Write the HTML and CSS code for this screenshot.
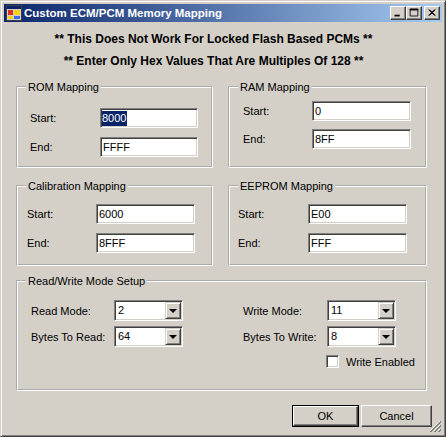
FILE: index.html
```html
<!DOCTYPE html>
<html lang="en">
<head>
    <meta charset="UTF-8">
    <title>Custom ECM/PCM Memory Mapping</title>
    <link rel="stylesheet" href="styles.css">
</head>
<body>
    <div class="window">
        <div class="titlebar">
            <svg class="app-icon" viewBox="0 0 16 16">
                <rect x="0.5" y="0.5" width="15" height="15" fill="#d4d0c8" stroke="#404040"/>
                <rect x="1" y="1" width="14" height="3" fill="#0a246a"/>
                <rect x="2" y="5" width="5" height="5" fill="#e03020"/>
                <rect x="8" y="5" width="6" height="5" fill="#f8d020"/>
                <rect x="2" y="11" width="5" height="3" fill="#f8d020"/>
                <rect x="8" y="11" width="6" height="3" fill="#3a6ee8"/>
            </svg>
            <span class="title">Custom ECM/PCM Memory Mapping</span>
            <div class="caption-buttons">
                <div class="cap-btn">
                    <svg viewBox="0 0 16 14"><rect x="4" y="9" width="6" height="2" fill="#000"/></svg>
                </div>
                <div class="cap-btn">
                    <svg viewBox="0 0 16 14"><path d="M3.5 2.5h9v8h-9z" fill="none" stroke="#000"/><rect x="3" y="2" width="10" height="2" fill="#000"/></svg>
                </div>
                <div class="cap-btn cap-close">
                    <svg viewBox="0 0 16 14"><path d="M4 3l7 7M5 3l7 7M11 3l-7 7M12 3l-7 7" stroke="#000" stroke-width="1.1"/></svg>
                </div>
            </div>
        </div>

        <div class="client">
            <p class="notice">** This Does Not Work For Locked Flash Based PCMs **</p>
            <p class="notice notice-second">** Enter Only Hex Values That Are Multiples Of 128 **</p>

            <div class="groups">
                <fieldset class="group">
                    <legend>ROM Mapping</legend>
                    <div class="group-body body-rom">
                        <label>Start:</label>
                        <div class="textbox"><span class="sel">8000</span></div>
                        <label>End:</label>
                        <div class="textbox">FFFF</div>
                    </div>
                </fieldset>

                <fieldset class="group">
                    <legend>RAM Mapping</legend>
                    <div class="group-body body-ram">
                        <label>Start:</label>
                        <div class="textbox">0</div>
                        <label>End:</label>
                        <div class="textbox">8FF</div>
                    </div>
                </fieldset>

                <fieldset class="group">
                    <legend>Calibration Mapping</legend>
                    <div class="group-body body-cal">
                        <label>Start:</label>
                        <div class="textbox">6000</div>
                        <label>End:</label>
                        <div class="textbox">8FFF</div>
                    </div>
                </fieldset>

                <fieldset class="group">
                    <legend>EEPROM Mapping</legend>
                    <div class="group-body body-eeprom">
                        <label>Start:</label>
                        <div class="textbox">E00</div>
                        <label>End:</label>
                        <div class="textbox">FFF</div>
                    </div>
                </fieldset>
            </div>

            <fieldset class="group group-rw">
                <legend>Read/Write Mode Setup</legend>
                <div class="rw-body">
                    <label>Read Mode:</label>
                    <div class="combo"><span>2</span><div class="drop"></div></div>
                    <span></span>
                    <label>Write Mode:</label>
                    <div class="combo"><span>11</span><div class="drop"></div></div>

                    <label>Bytes To Read:</label>
                    <div class="combo"><span>64</span><div class="drop"></div></div>
                    <span></span>
                    <label>Bytes To Write:</label>
                    <div class="combo"><span>8</span><div class="drop"></div></div>

                    <div class="check-row">
                        <div class="checkbox"></div>
                        <span>Write Enabled</span>
                    </div>
                </div>
            </fieldset>

            <div class="buttons">
                <div class="btn btn-default"><div class="btn-face">OK</div></div>
                <div class="btn"><div class="btn-face">Cancel</div></div>
            </div>
        </div>

        <svg class="grip" viewBox="0 0 12 12">
            <path d="M11 1L1 11M11 5L5 11M11 9L9 11" stroke="#fff" stroke-width="1"/>
            <path d="M12 1L1 12M12 2L2 12M12 5L5 12M12 6L6 12M12 9L9 12M12 10L10 12" stroke="#808080" stroke-width="1"/>
        </svg>
    </div>
</body>
</html>
```

FILE: styles.css
```css
body {
    margin: 0;
    background: #d4d0c8;
    font-family: "Liberation Sans", Arial, sans-serif;
    font-size: 11px;
    color: #000;
}
.window {
    position: relative;
    width: 446px;
    height: 437px;
    box-sizing: border-box;
    border: 1px solid;
    border-color: #d4d0c8 #404040 #404040 #d4d0c8;
    box-shadow: inset 1px 1px #fff, inset -1px -1px #808080;
    padding: 3px;
    background: #d4d0c8;
}
.titlebar {
    height: 18px;
    display: flex;
    align-items: center;
    padding: 0 2px;
    background: linear-gradient(to right, #0a246a, #a6caf0);
}
.app-icon {
    width: 16px;
    height: 16px;
    margin-right: 2px;
}
.title {
    flex: 1;
    font-weight: bold;
    font-size: 11.5px;
    color: #fff;
}
.caption-buttons {
    display: flex;
}
.cap-btn {
    width: 16px;
    height: 14px;
    box-sizing: border-box;
    background: #d4d0c8;
    border: 1px solid;
    border-color: #fff #404040 #404040 #fff;
    box-shadow: inset -1px -1px #808080;
}
.cap-btn svg {
    display: block;
    width: 14px;
    height: 12px;
}
.cap-close {
    margin-left: 2px;
}

.client {
    padding: 0 15px 0 12px;
}
.notice {
    margin: 10px 16px 0 0;
    text-align: center;
    font-weight: bold;
    font-size: 12px;
    line-height: 14px;
}
.notice-second {
    margin-top: 8px;
}

.groups {
    display: grid;
    grid-template-columns: 197px 199px;
    column-gap: 15px;
    row-gap: 11px;
    margin-top: 12px;
}
.group {
    margin: 0;
    padding: 0;
    min-width: 0;
    border: 2px groove #fff;
}
.group legend {
    margin-left: 8px;
    padding: 0 2px;
    line-height: 14px;
}
.group-body {
    display: grid;
    align-items: center;
}
.body-rom {
    grid-template-columns: 70px 98px;
    row-gap: 9px;
    padding: 14px 0 9px 12px;
}
.body-ram {
    grid-template-columns: 69px 99px;
    row-gap: 8px;
    padding: 7px 0 17px 13px;
}
.body-cal {
    grid-template-columns: 69px 99px;
    row-gap: 9px;
    padding: 11px 0 11px 9px;
}
.body-eeprom {
    grid-template-columns: 70px 99px;
    row-gap: 9px;
    padding: 11px 0 11px 8px;
}

.textbox {
    height: 20px;
    box-sizing: border-box;
    background: #fff;
    border: 1px solid;
    border-color: #808080 #fff #fff #808080;
    box-shadow: inset 1px 1px #404040, inset -1px -1px #d4d0c8;
    padding: 2px 2px 0 2px;
    line-height: 15px;
}
.sel {
    display: inline-block;
    background: #0a246a;
    color: #fff;
    margin-left: -1px;
    padding-right: 1px;
}

.group-rw {
    margin-top: 8px;
}
.rw-body {
    display: grid;
    grid-template-columns: 83px 69px 60px 84px 69px;
    align-items: center;
    row-gap: 5px;
    padding: 12px 0 21px 13px;
    white-space: nowrap;
}
.combo {
    position: relative;
    height: 21px;
    box-sizing: border-box;
    background: #fff;
    border: 1px solid;
    border-color: #808080 #fff #fff #808080;
    box-shadow: inset 1px 1px #404040, inset -1px -1px #d4d0c8;
    padding: 2px 0 0 3px;
    line-height: 15px;
}
.drop {
    position: absolute;
    top: 1px;
    right: 1px;
    width: 16px;
    height: 17px;
    box-sizing: border-box;
    background: #d4d0c8;
    border: 1px solid;
    border-color: #d4d0c8 #404040 #404040 #d4d0c8;
    box-shadow: inset 1px 1px #fff, inset -1px -1px #808080;
}
.drop::after {
    content: "";
    position: absolute;
    left: 3px;
    top: 6px;
    border-left: 4px solid transparent;
    border-right: 4px solid transparent;
    border-top: 4px solid #000;
}
.check-row {
    grid-column: 5;
    display: flex;
    align-items: center;
    margin: 3px 0 0 -1px;
}
.checkbox {
    flex: none;
    width: 13px;
    height: 13px;
    box-sizing: border-box;
    background: #fff;
    border: 1px solid;
    border-color: #808080 #fff #fff #808080;
    box-shadow: inset 1px 1px #404040, inset -1px -1px #d4d0c8;
    margin-right: 7px;
}

.buttons {
    display: flex;
    justify-content: flex-end;
    gap: 2px;
    margin: 14px -5px 0 0;
}
.btn {
    width: 71px;
    height: 22px;
    box-sizing: border-box;
}
.btn-face {
    height: 100%;
    box-sizing: border-box;
    border: 1px solid;
    border-color: #fff #404040 #404040 #fff;
    box-shadow: inset -1px -1px #808080;
    display: flex;
    align-items: center;
    justify-content: center;
}
.btn-default {
    width: 67px;
    border: 1px solid #000;
}

.grip {
    position: absolute;
    right: 4px;
    bottom: 4px;
    width: 12px;
    height: 12px;
}
```
